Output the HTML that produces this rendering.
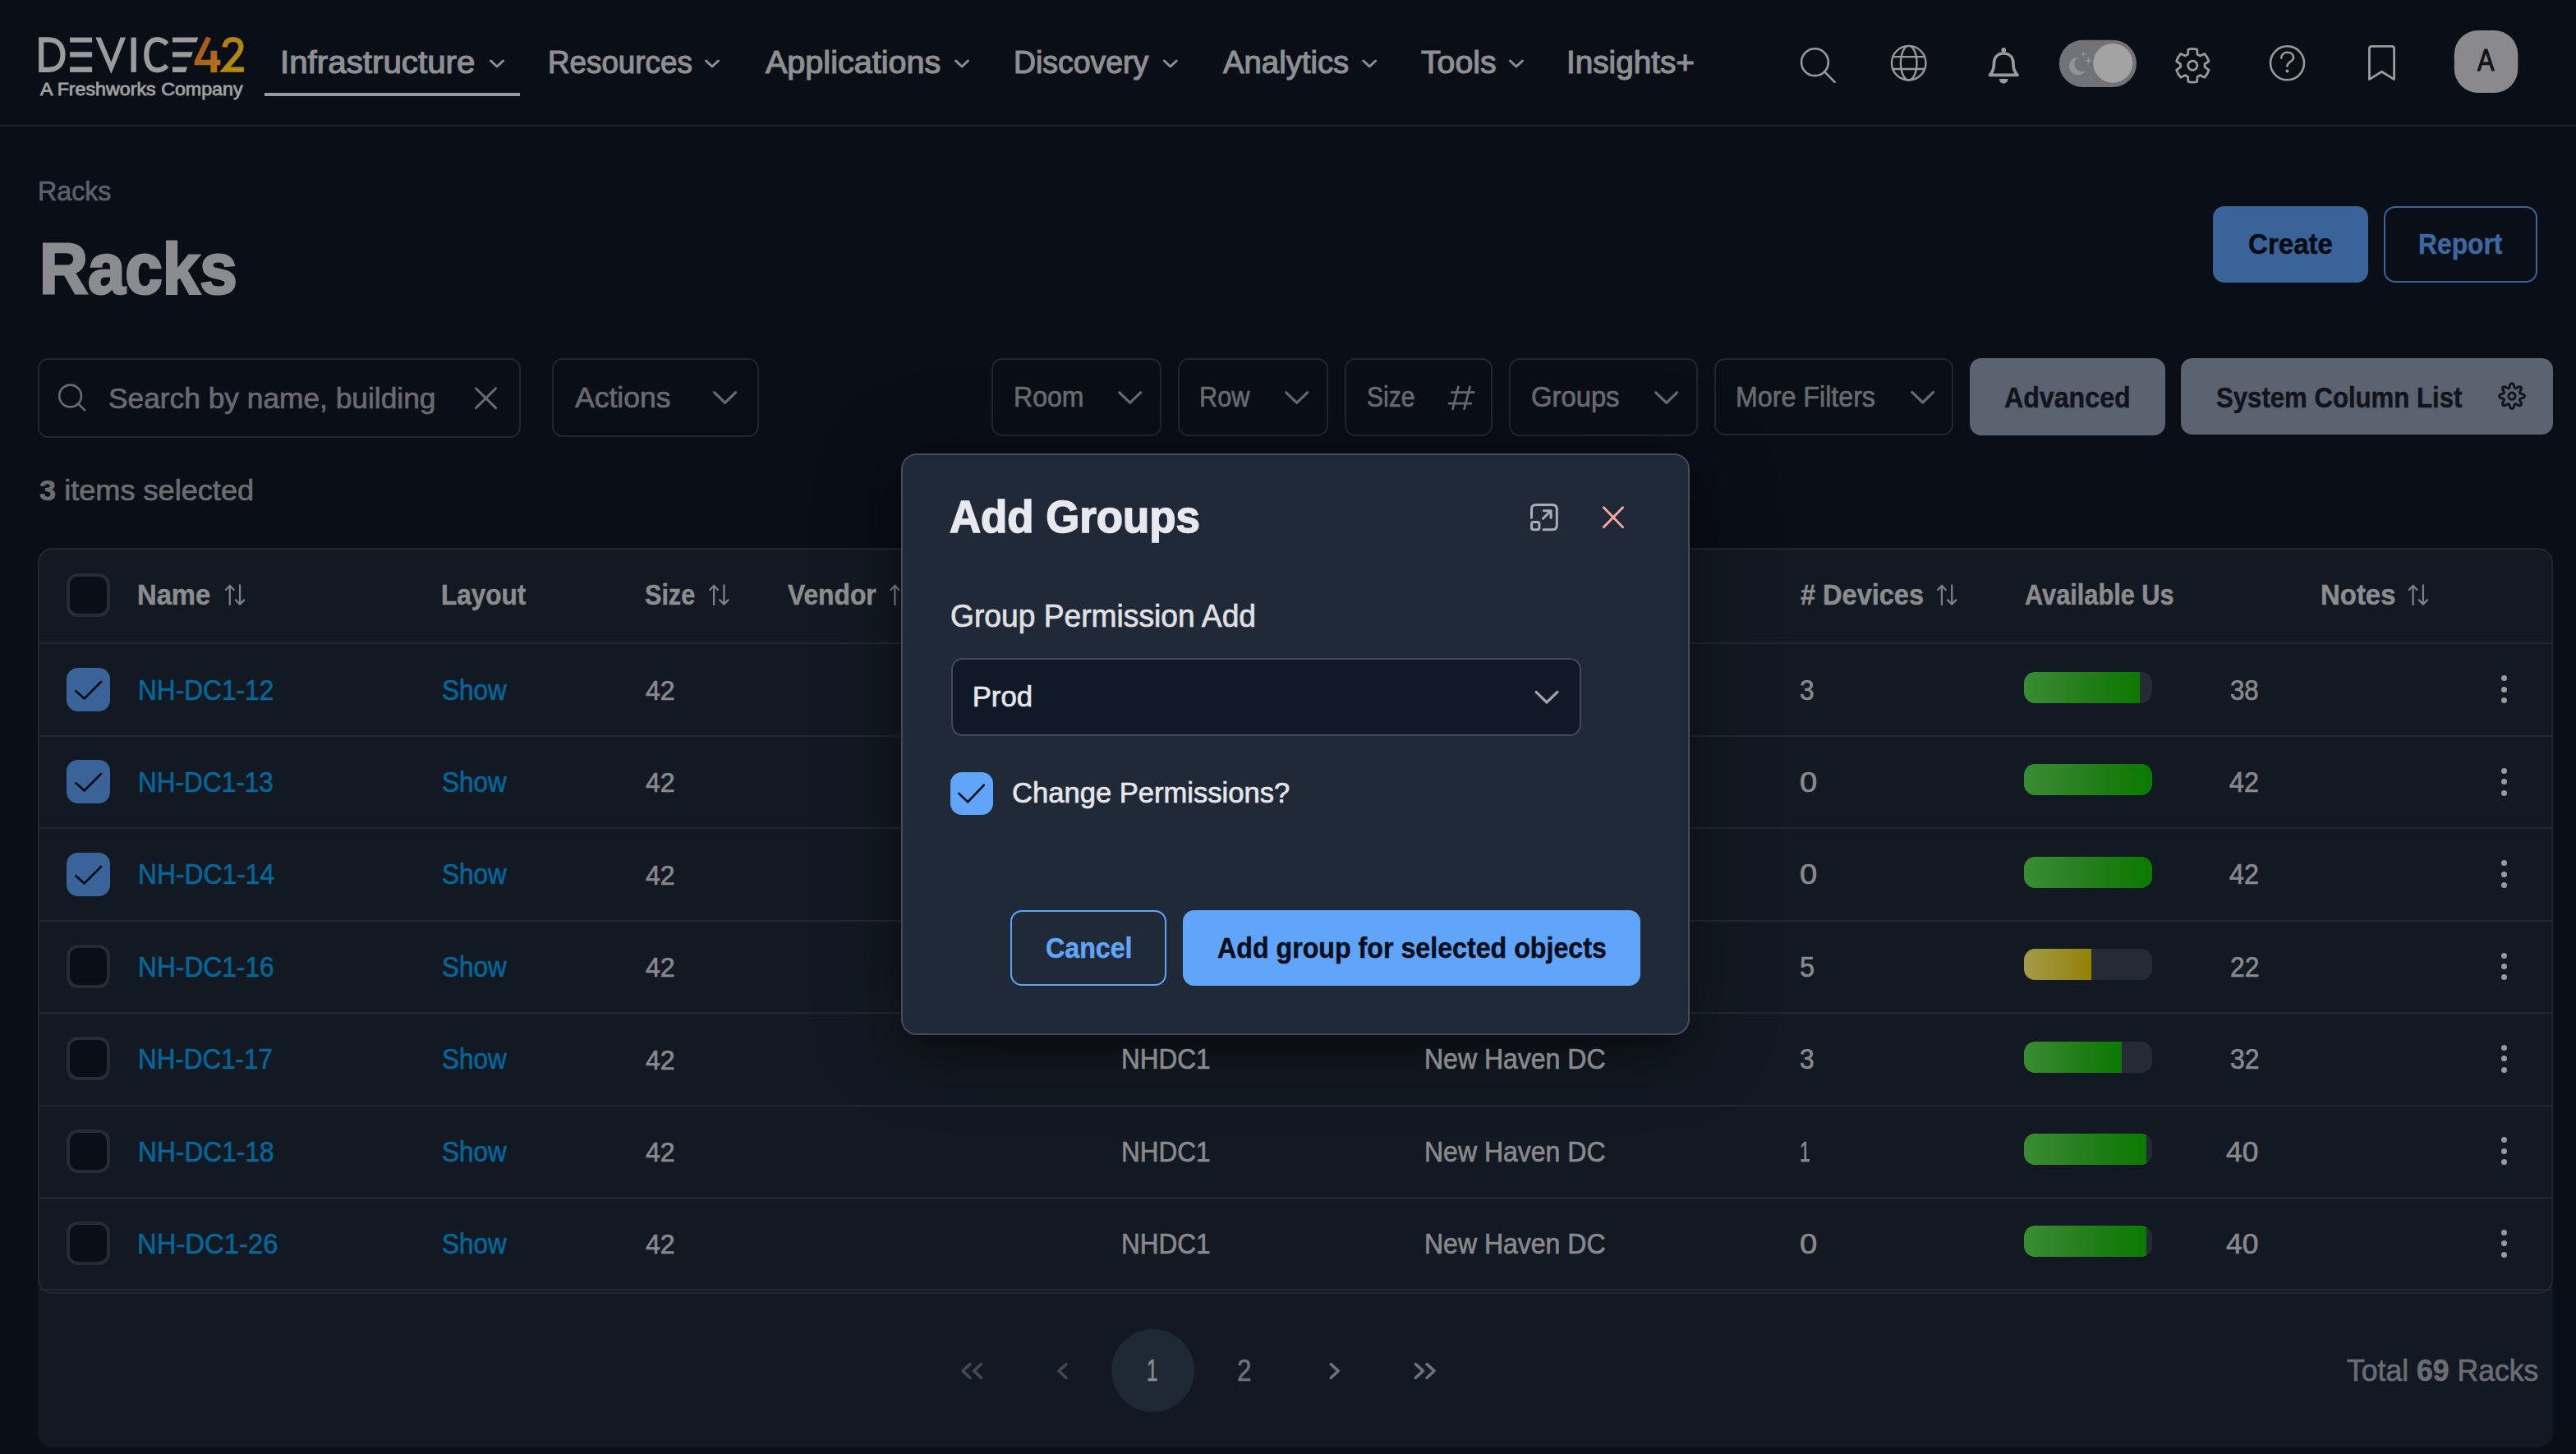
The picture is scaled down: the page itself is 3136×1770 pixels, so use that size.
<!DOCTYPE html>
<html lang="en">
<head>
<meta charset="utf-8">
<title>Racks - Device42</title>
<style>
html,body{margin:0;padding:0;}
body{width:3136px;height:1770px;overflow:hidden;background:#0a0e17;font-family:"Liberation Sans",sans-serif;position:relative;}
.t{position:absolute;white-space:nowrap;line-height:1;transform-origin:0 50%;display:block;}
.t b{font-weight:700;}
.abs{position:absolute;display:block;}
.box{position:absolute;box-sizing:border-box;border:2px solid #22262f;border-radius:13px;}
svg{position:absolute;overflow:visible;}
.hr{position:absolute;left:48px;width:3058px;height:2px;background:#232832;}
.cb{position:absolute;box-sizing:border-box;width:53px;height:53px;left:81px;border-radius:14px;}
.cb.off{border:4px solid #272b35;background:#0a0e17;}
.cb.on{background:#3a6399;}
.bar{position:absolute;left:2464px;width:156px;height:38px;border-radius:13.5px;background:#252a35;overflow:hidden;}
.bar i{position:absolute;left:0;top:0;height:100%;background:linear-gradient(90deg,#378d30 0,#2e8426 30%,#1f7d16 60%,#0b7a01 100%);}
.bar.y i{background:linear-gradient(90deg,#a39a4a 0,#9a8e2a 50%,#948205 100%);}
.dot{position:absolute;width:7px;height:7px;border-radius:50%;background:#9a9a9c;left:3045px;}
</style>
</head>
<body>
<!-- header -->
<div class="abs" style="left:0;top:152px;width:3136px;height:2px;background:#1d212a;"></div>
<svg width="3136" height="152" viewBox="0 0 3136 152" style="left:0;top:0;">
 <defs><linearGradient id="g4" x1="0" y1="0" x2="1" y2="1"><stop offset="0" stop-color="#9d4f1e"/><stop offset="1" stop-color="#b9761a"/></linearGradient>
 <linearGradient id="g2" gradientUnits="userSpaceOnUse" x1="270" y1="45" x2="297" y2="88"><stop offset="0" stop-color="#b37c14"/><stop offset="1" stop-color="#b0920e"/></linearGradient></defs>
 <!-- logo -->
 <g fill="none" stroke="#9c9c9c" stroke-width="6.2">
  <path d="M50.2 48.3H59.5C70.5 48.3 76.5 55.8 76.5 66.6S70.5 84.8 59.5 84.8H50.2Z"/>
  <path d="M203.2 53.6C199.6 49.8 196 48 191.4 48C183.2 48 178.3 55.4 178.3 66.6S183.2 85.3 191.4 85.3C196 85.3 199.6 83.6 203.2 79.8"/>
 </g>
 <g fill="#9c9c9c">
  <rect x="85.1" y="45.6" width="27" height="6"/><rect x="85.1" y="63.2" width="27" height="6.4"/><rect x="85.1" y="81.4" width="27" height="6.5"/>
  <path d="M116.3 45.6H122.9L135.4 75.5L146.6 45.6H153.2L135.4 90Z"/>
  <rect x="159.5" y="45.6" width="6.3" height="42.3"/>
  <path d="M210 45.6H241.4L239.2 51.6H210Z"/><path d="M210 63.2H234.9L232.6 69.6H210Z"/><path d="M210 81.4H228.2L225.8 87.9H210Z"/>
 </g>
 <path d="M251 44.6L257.2 46.8L244.6 72.8H256.4V61.8H264.3V72.8H268.4V79.2H264.3V88.2H256.4V79.2H236.6V74.6Z" fill="url(#g4)"/>
 <path d="M273.6 57.5C274.2 51.2 278 48 283.6 48C289.6 48 293.4 51.4 293.4 56.8C293.4 61.6 291 65 286.4 70L273.8 84.7H296.9" fill="none" stroke="url(#g2)" stroke-width="6.2"/>
 <!-- active underline -->
 <rect x="322" y="113" width="311" height="4" fill="#9a9b9d"/>
 <!-- nav chevrons -->
 <g fill="none" stroke="#8e8f92" stroke-width="3" stroke-linecap="round" stroke-linejoin="round">
  <path d="M597.5 74L605 81L612.5 74"/><path d="M859.5 74L867 81L874.5 74"/><path d="M1163.5 74L1171 81L1178.5 74"/>
  <path d="M1417.3 74L1424.8 81L1432.3 74"/><path d="M1659.7 74L1667.2 81L1674.7 74"/><path d="M1838.4 74L1845.9 81L1853.4 74"/>
 </g>
 <!-- search -->
 <g fill="none" stroke="#9a9a9a" stroke-width="2.6" stroke-linecap="round">
  <circle cx="2209.4" cy="75.7" r="16.4"/><path d="M2221.4 87.6L2233.6 99.8"/>
 </g>
 <!-- globe -->
 <g fill="none" stroke="#9a9a9a" stroke-width="2.4">
  <circle cx="2323.7" cy="76.7" r="20.8"/><ellipse cx="2323.7" cy="76.7" rx="9.8" ry="20.8"/>
  <path d="M2304.4 69.1H2343M2304.4 84H2343"/>
 </g>
 <!-- bell -->
 <path d="M2439.2 65C2431.5 65 2427.4 70.5 2427.4 78C2427.4 84 2425.6 88 2422.4 91.3H2456C2452.8 88 2451 84 2451 78C2451 70.5 2446.9 65 2439.2 65Z" fill="none" stroke="#9a9a9a" stroke-width="3.7" stroke-linejoin="round"/>
 <circle cx="2439.2" cy="61" r="2.9" fill="#9a9a9a"/>
 <path d="M2433.8 96H2444.6A5.4 5.6 0 0 1 2433.8 96Z" fill="#9a9a9a"/>
 <!-- toggle -->
 <rect x="2506.8" y="48.8" width="94.2" height="57.2" rx="28.6" fill="#717379"/>
 <circle cx="2572.2" cy="76.9" r="24" fill="#a3a3a3"/>
 <path d="M2530.5 69.4A11 11 0 1 0 2539.4 86.2A9 9 0 0 1 2530.5 69.4Z" fill="#929397"/>
 <path d="M2536.400 61.800L2537.300 65.000L2540.400 65.800L2537.300 66.700L2536.400 69.800L2535.500 66.700L2532.400 65.800L2535.500 65.000Z M2542.600 68.800L2543.800 72.800L2547.600 73.800L2543.800 75.000L2542.600 78.800L2541.400 75.000L2537.600 73.800L2541.400 72.800Z" fill="#929397"/>
 <!-- gear placeholder --><g fill="none" stroke="#9a9a9a" stroke-width="2.8" stroke-linejoin="round"><path d="M2663.5 66.2L2664.0 60.1A20.4 20.4 0 0 1 2674.6 60.1L2675.1 66.2A14.8 14.8 0 0 1 2678.2 68.0L2683.7 65.4A20.4 20.4 0 0 1 2689.0 74.5L2684.0 78.0A14.8 14.8 0 0 1 2684.0 81.6L2689.0 85.1A20.4 20.4 0 0 1 2683.7 94.2L2678.2 91.6A14.8 14.8 0 0 1 2675.1 93.4L2674.6 99.5A20.4 20.4 0 0 1 2664.0 99.5L2663.5 93.4A14.8 14.8 0 0 1 2660.4 91.6L2654.9 94.2A20.4 20.4 0 0 1 2649.6 85.1L2654.6 81.6A14.8 14.8 0 0 1 2654.6 78.0L2649.6 74.5A20.4 20.4 0 0 1 2654.9 65.4L2660.4 68.0A14.8 14.8 0 0 1 2663.5 66.2Z"/><circle cx="2669.3" cy="79.8" r="5.6"/></g>
 <!-- help -->
 <g fill="none" stroke="#9a9a9a" stroke-width="2.6" stroke-linecap="round">
  <circle cx="2784.5" cy="76.8" r="20.5"/>
  <path d="M2777.2 70.6C2777.2 66.4 2780.4 63.8 2784.6 63.8C2788.8 63.8 2792 66.4 2792 70.2C2792 74.8 2784.4 75.2 2784.4 80.4"/>
 </g>
 <circle cx="2784.4" cy="86.6" r="2" fill="#9a9a9a"/>
 <!-- bookmark -->
 <path d="M2884.4 96.6V59.4C2884.4 57.6 2885.6 56.4 2887.4 56.4H2911.6C2913.4 56.4 2914.6 57.6 2914.6 59.4V96.6L2899.5 87.2Z" fill="none" stroke="#9a9a9a" stroke-width="2.8" stroke-linejoin="round"/>
 <!-- avatar -->
 <rect x="2987.8" y="37" width="77.5" height="76" rx="29" fill="#8a8a8c"/>
</svg>

<!-- page actions -->
<div class="abs" style="left:2694px;top:251px;width:189px;height:93px;border-radius:14px;background:#3a6399;"></div>
<div class="abs" style="left:2902px;top:251px;width:187px;height:93px;border-radius:14px;border:2px solid #3a6399;box-sizing:border-box;"></div>
<!-- filter row -->
<div class="box" style="left:46px;top:436px;width:588px;height:96.5px;"></div>
<div class="box" style="left:672.4px;top:436px;width:252px;height:95.6px;"></div>
<div class="box" style="left:1207.4px;top:436px;width:206.2px;height:95.4px;"></div>
<div class="box" style="left:1433.5px;top:436px;width:183.1px;height:95.4px;"></div>
<div class="box" style="left:1636.5px;top:436px;width:180px;height:95.4px;"></div>
<div class="box" style="left:1836.5px;top:436px;width:230.1px;height:95.4px;"></div>
<div class="box" style="left:2086.5px;top:436px;width:291.1px;height:93.6px;"></div>
<div class="abs" style="left:2397.6px;top:436px;width:238.6px;height:94px;border-radius:14px;background:#5b6270;"></div>
<div class="abs" style="left:2655px;top:436px;width:453px;height:92.6px;border-radius:14px;background:#5b6270;"></div>
<svg width="3136" height="140" viewBox="0 420 3136 140" style="left:0;top:420px;">
 <g fill="none" stroke="#696a6e" stroke-width="2.6" stroke-linecap="round">
  <circle cx="85.6" cy="482" r="13.4"/><path d="M95.4 491.8L103.2 499.4"/>
  <path d="M579.4 472.8L603.6 496.6M603.6 472.8L579.4 496.6" stroke-width="3"/>
 </g>
 <g fill="none" stroke="#696a6e" stroke-width="3.2" stroke-linecap="round" stroke-linejoin="round">
  <path d="M869.6 477.6L882.6 490.4L895.6 477.6"/>
  <path d="M1362.8 477.8L1375.7 490.4L1388.6 477.8"/>
  <path d="M1565.8 477.8L1578.7 490.4L1591.6 477.8"/>
  <path d="M2015.8 477.8L2028.7 490.4L2041.6 477.8"/>
  <path d="M2327.8 477.4L2340.7 490L2353.6 477.4"/>
 </g>
 <g fill="none" stroke="#696a6e" stroke-width="2.7" stroke-linecap="round">
  <path d="M1775.3 470.8L1768.5 497.8M1789.5 470.8L1782.5 497.8M1767.2 477.6H1794.4M1763.8 491.2H1790.8"/>
 </g>
 <g fill="none" stroke="#10141c" stroke-width="3.0" stroke-linejoin="round"><path d="M3073.4 482.2L3073.2 483.0L3072.7 483.7L3071.8 484.4L3070.2 484.8L3069.0 485.2L3068.2 485.5L3067.7 485.9L3067.5 486.4L3067.6 487.1L3067.9 487.9L3068.4 489.0L3069.3 490.4L3069.5 491.5L3069.3 492.4L3068.9 493.1L3068.2 493.5L3067.3 493.7L3066.2 493.5L3064.8 492.6L3063.7 492.1L3062.9 491.8L3062.2 491.7L3061.7 491.9L3061.3 492.4L3061.0 493.2L3060.6 494.4L3060.2 496.0L3059.5 496.9L3058.8 497.4L3058.0 497.6L3057.2 497.4L3056.5 496.9L3055.8 496.0L3055.4 494.4L3055.0 493.2L3054.7 492.4L3054.3 491.9L3053.8 491.7L3053.1 491.8L3052.3 492.1L3051.2 492.6L3049.8 493.5L3048.7 493.7L3047.8 493.5L3047.1 493.1L3046.7 492.4L3046.5 491.5L3046.7 490.4L3047.6 489.0L3048.1 487.9L3048.4 487.1L3048.5 486.4L3048.3 485.9L3047.8 485.5L3047.0 485.2L3045.8 484.8L3044.2 484.4L3043.3 483.7L3042.8 483.0L3042.6 482.2L3042.8 481.4L3043.3 480.7L3044.2 480.0L3045.8 479.6L3047.0 479.2L3047.8 478.9L3048.3 478.5L3048.5 478.0L3048.4 477.3L3048.1 476.5L3047.6 475.4L3046.7 474.0L3046.5 472.9L3046.7 472.0L3047.1 471.3L3047.8 470.9L3048.7 470.7L3049.8 470.9L3051.2 471.8L3052.3 472.3L3053.1 472.6L3053.8 472.7L3054.3 472.5L3054.7 472.0L3055.0 471.2L3055.4 470.0L3055.8 468.4L3056.5 467.5L3057.2 467.0L3058.0 466.8L3058.8 467.0L3059.5 467.5L3060.2 468.4L3060.6 470.0L3061.0 471.2L3061.3 472.0L3061.7 472.5L3062.2 472.7L3062.9 472.6L3063.7 472.3L3064.8 471.8L3066.2 470.9L3067.3 470.7L3068.2 470.9L3068.9 471.3L3069.3 472.0L3069.5 472.9L3069.3 474.0L3068.4 475.4L3067.9 476.5L3067.6 477.3L3067.5 478.0L3067.7 478.5L3068.2 478.9L3069.0 479.2L3070.2 479.6L3071.8 480.0L3072.7 480.7L3073.2 481.4Z"/><circle cx="3058" cy="482.2" r="4.1"/></g>
</svg>

<!-- table card -->
<div class="abs" style="left:46px;top:667px;width:3062px;height:1095px;border-radius:18px;background:#131922;"></div>
<div class="abs" style="left:46px;top:667px;width:3062px;height:908px;border-radius:18px;border:2px solid #22262f;box-sizing:border-box;"></div>
<div class="hr" style="top:781.7px;"></div>
<div class="hr" style="top:895.0px;"></div>
<div class="hr" style="top:1007.4px;"></div>
<div class="hr" style="top:1119.8px;"></div>
<div class="hr" style="top:1232.2px;"></div>
<div class="hr" style="top:1344.6px;"></div>
<div class="hr" style="top:1457.0px;"></div>
<div class="hr" style="top:1568.6px;"></div>
<div class="cb off" style="top:698px;"></div>
<svg width="3136" height="60" viewBox="0 700 3136 60" style="left:0;top:700px;"><g fill="none" stroke-width="2.3" stroke-linecap="round" stroke-linejoin="round"><path d="M279.8 736V713M274.9 718L279.8 713L284.7 718" stroke="#7e7f82"/><path d="M292.1 712.4V735.6M286.9 730.4L292.1 735.6L297.3 730.4" stroke="#7e7f82"/><path d="M869.1 736V713M864.2 718L869.1 713L874.0 718" stroke="#7e7f82"/><path d="M881.4 712.4V735.6M876.2 730.4L881.4 735.6L886.6 730.4" stroke="#7e7f82"/><path d="M1089.4 736V713M1084.5 718L1089.4 713L1094.3 718" stroke="#7e7f82"/><path d="M2363.9 736V713M2359.0 718L2363.9 713L2368.8 718" stroke="#7e7f82"/><path d="M2376.2 712.4V735.6M2371.0 730.4L2376.2 735.6L2381.4 730.4" stroke="#7e7f82"/><path d="M2937.6 736V713M2932.7 718L2937.6 713L2942.5 718" stroke="#7e7f82"/><path d="M2949.9 712.4V735.6M2944.7 730.4L2949.9 735.6L2955.1 730.4" stroke="#7e7f82"/></g></svg>
<div class="cb on" style="top:812.8px;"><svg width="53" height="53" viewBox="0 0 53 53" style="left:0;top:0;"><path d="M11.4 28.2L21.6 37.4L42 17" fill="none" stroke="#0b0f18" stroke-width="2.8" stroke-linecap="round" stroke-linejoin="round"/></svg></div>
<div class="bar" style="top:817.9px;"><i style="width:141.1px;"></i></div>
<div class="dot" style="top:822.4px;"></div>
<div class="dot" style="top:835.8px;"></div>
<div class="dot" style="top:849.2px;"></div>
<div class="cb on" style="top:925.2px;"><svg width="53" height="53" viewBox="0 0 53 53" style="left:0;top:0;"><path d="M11.4 28.2L21.6 37.4L42 17" fill="none" stroke="#0b0f18" stroke-width="2.8" stroke-linecap="round" stroke-linejoin="round"/></svg></div>
<div class="bar" style="top:930.3px;"><i style="width:156.0px;"></i></div>
<div class="dot" style="top:934.8px;"></div>
<div class="dot" style="top:948.2px;"></div>
<div class="dot" style="top:961.6px;"></div>
<div class="cb on" style="top:1037.6px;"><svg width="53" height="53" viewBox="0 0 53 53" style="left:0;top:0;"><path d="M11.4 28.2L21.6 37.4L42 17" fill="none" stroke="#0b0f18" stroke-width="2.8" stroke-linecap="round" stroke-linejoin="round"/></svg></div>
<div class="bar" style="top:1042.7px;"><i style="width:156.0px;"></i></div>
<div class="dot" style="top:1047.2px;"></div>
<div class="dot" style="top:1060.6px;"></div>
<div class="dot" style="top:1074.0px;"></div>
<div class="cb off" style="top:1150.0px;"></div>
<div class="bar y" style="top:1155.1px;"><i style="width:81.7px;"></i></div>
<div class="dot" style="top:1159.6px;"></div>
<div class="dot" style="top:1173.0px;"></div>
<div class="dot" style="top:1186.4px;"></div>
<div class="cb off" style="top:1262.4px;"></div>
<div class="bar" style="top:1267.5px;"><i style="width:118.9px;"></i></div>
<div class="dot" style="top:1272.0px;"></div>
<div class="dot" style="top:1285.4px;"></div>
<div class="dot" style="top:1298.8px;"></div>
<div class="cb off" style="top:1374.8px;"></div>
<div class="bar" style="top:1379.9px;"><i style="width:148.6px;"></i></div>
<div class="dot" style="top:1384.4px;"></div>
<div class="dot" style="top:1397.8px;"></div>
<div class="dot" style="top:1411.2px;"></div>
<div class="cb off" style="top:1487.2px;"></div>
<div class="bar" style="top:1492.3px;"><i style="width:148.6px;"></i></div>
<div class="dot" style="top:1496.8px;"></div>
<div class="dot" style="top:1510.2px;"></div>
<div class="dot" style="top:1523.6px;"></div>
<div class="abs" style="left:1352.9px;top:1617.8px;width:101.2px;height:101.2px;border-radius:50%;background:#1f2835;"></div>
<svg width="700" height="40" viewBox="1150 1650 700 40" style="left:1150px;top:1650px;"><g fill="none" stroke-width="3.6" stroke-linecap="round" stroke-linejoin="round">
<path d="M1181 1660.6L1172 1668.9L1181 1677.2M1194.6 1660.6L1185.6 1668.9L1194.6 1677.2" stroke="#44474e"/>
<path d="M1298 1660.6L1289 1668.9L1298 1677.2" stroke="#44474e"/>
<path d="M1620.2 1660.6L1629.2 1668.9L1620.2 1677.2" stroke="#6e7075"/>
<path d="M1723.4 1660.6L1732.4 1668.9L1723.4 1677.2M1737 1660.6L1746 1668.9L1737 1677.2" stroke="#6e7075"/>
</g></svg>
<!-- modal -->
<div class="abs" style="left:1097.4px;top:552.4px;width:959.8px;height:707.6px;border-radius:19px;background:#1f2937;border:2px solid #424b57;box-sizing:border-box;box-shadow:0 26px 44px -14px rgba(0,0,0,0.5),0 8px 110px 0 rgba(0,0,0,0.28);"></div>
<div class="abs" style="left:1157.5px;top:801px;width:767.4px;height:94.6px;border-radius:14px;background:#111827;border:2px solid #424b57;box-sizing:border-box;"></div>
<div class="abs" style="left:1157px;top:940.2px;width:52.4px;height:52px;border-radius:14px;background:#60a5fa;"></div>
<div class="abs" style="left:1229.8px;top:1107.8px;width:190.6px;height:92.4px;border-radius:14px;border:2.5px solid #60a5fa;box-sizing:border-box;"></div>
<div class="abs" style="left:1439.8px;top:1107.8px;width:557.2px;height:92.4px;border-radius:14px;background:#60a5fa;"></div>
<svg width="960" height="710" viewBox="1097 552 960 710" style="left:1097px;top:552px;">
 <!-- maximize -->
 <g fill="none" stroke="#a9adb5" stroke-width="3" stroke-linecap="round" stroke-linejoin="round">
  <path d="M1864.5 630.2V619.9C1864.5 616.4 1866.5 614.4 1870 614.4H1889.8C1893.3 614.4 1895.3 616.4 1895.3 619.9V639.2C1895.3 642.7 1893.3 644.7 1889.8 644.7H1879"/>
  <rect x="1864.5" y="635.6" width="9.4" height="9.1" rx="2.4"/>
  <path d="M1878.4 631.2L1887.6 622.2M1879.4 621.7H1888.1V630.2"/>
 </g>
 <!-- close -->
 <path d="M1952.3 617.8L1975.6 641.7M1975.6 617.8L1952.3 641.7" fill="none" stroke="#fca5a5" stroke-width="2.9" stroke-linecap="round"/>
 <!-- select chevron -->
 <path d="M1870 842.4L1883 855L1896 842.4" fill="none" stroke="#a3a4a9" stroke-width="3.2" stroke-linecap="round" stroke-linejoin="round"/>
 <!-- check -->
 <path d="M1167.4 966L1178.2 976.2L1197.8 955.8" fill="none" stroke="#111827" stroke-width="2.8" stroke-linecap="round" stroke-linejoin="round"/>
</svg>

<span class="t " style="left:48.6px;top:98.4px;font-size:21.66px;color:#a0a0a0;-webkit-text-stroke:0.8px;transform:scaleX(1.0726);">A Freshworks Company</span>
<span class="t " style="left:340.5px;top:57.4px;font-size:38.08px;color:#8e8f92;-webkit-text-stroke:1.2px;transform:scaleX(1.0584);">Infrastructure</span>
<span class="t " style="left:666.8px;top:57.4px;font-size:38.08px;color:#8e8f92;-webkit-text-stroke:1.2px;transform:scaleX(0.9659);">Resources</span>
<span class="t " style="left:931.7px;top:57.4px;font-size:38.08px;color:#8e8f92;-webkit-text-stroke:1.2px;transform:scaleX(1.0383);">Applications</span>
<span class="t " style="left:1233.5px;top:57.4px;font-size:38.08px;color:#8e8f92;-webkit-text-stroke:1.2px;transform:scaleX(0.9825);">Discovery</span>
<span class="t " style="left:1488.5px;top:57.4px;font-size:38.08px;color:#8e8f92;-webkit-text-stroke:1.2px;transform:scaleX(1.0059);">Analytics</span>
<span class="t " style="left:1729.7px;top:57.4px;font-size:38.08px;color:#8e8f92;-webkit-text-stroke:1.2px;transform:scaleX(1.0295);">Tools</span>
<span class="t " style="left:1907.2px;top:57.4px;font-size:38.08px;color:#8e8f92;-webkit-text-stroke:1.2px;transform:scaleX(1.0161);">Insights+</span>
<span class="t " style="left:3015.7px;top:55.0px;font-size:37.65px;color:#121212;-webkit-text-stroke:1.0px;transform:scaleX(0.8154);">A</span>
<span class="t " style="left:45.6px;top:214.7px;font-size:34.01px;color:#5a626c;-webkit-text-stroke:0.7px;transform:scaleX(0.9467);">Racks</span>
<span class="t " style="left:48.0px;top:282.7px;font-size:87.94px;color:#8b8c8f;font-weight:700;-webkit-text-stroke:3.2px;transform:scaleX(0.9285);">Racks</span>
<span class="t " style="left:2737.0px;top:279.7px;font-size:35.47px;color:#070b14;font-weight:700;-webkit-text-stroke:0.5px;transform:scaleX(0.9330);">Create</span>
<span class="t " style="left:2944.4px;top:279.7px;font-size:35.47px;color:#3d69a3;font-weight:700;-webkit-text-stroke:0.5px;transform:scaleX(0.8964);">Report</span>
<span class="t " style="left:132.3px;top:467.8px;font-size:34.59px;color:#696a6e;-webkit-text-stroke:0.7px;transform:scaleX(1.0211);">Search by name, building</span>
<span class="t " style="left:700.4px;top:466.1px;font-size:35.17px;color:#696a6e;-webkit-text-stroke:0.7px;transform:scaleX(1.0104);">Actions</span>
<span class="t " style="left:1234.1px;top:466.4px;font-size:34.74px;color:#696a6e;-webkit-text-stroke:0.7px;transform:scaleX(0.9225);">Room</span>
<span class="t " style="left:1460.2px;top:466.4px;font-size:34.74px;color:#696a6e;-webkit-text-stroke:0.7px;transform:scaleX(0.8824);">Row</span>
<span class="t " style="left:1663.8px;top:466.4px;font-size:34.74px;color:#696a6e;-webkit-text-stroke:0.7px;transform:scaleX(0.8652);">Size</span>
<span class="t " style="left:1864.4px;top:466.4px;font-size:34.74px;color:#696a6e;-webkit-text-stroke:0.7px;transform:scaleX(0.9438);">Groups</span>
<span class="t " style="left:2113.1px;top:466.4px;font-size:34.74px;color:#696a6e;-webkit-text-stroke:0.7px;transform:scaleX(0.9271);">More Filters</span>
<span class="t " style="left:2440.0px;top:465.9px;font-size:35.03px;color:#10141c;font-weight:700;-webkit-text-stroke:0.5px;transform:scaleX(0.9182);">Advanced</span>
<span class="t " style="left:2697.7px;top:465.9px;font-size:35.03px;color:#10141c;font-weight:700;-webkit-text-stroke:0.5px;transform:scaleX(0.8893);">System Column List</span>
<span class="t " style="left:47.6px;top:578.7px;font-size:35.03px;color:#6c6d70;-webkit-text-stroke:0.7px;transform:scaleX(1.0319);"><b>3</b> items selected</span>
<span class="t " style="left:167.4px;top:706.8px;font-size:34.30px;color:#8b8c8e;font-weight:700;-webkit-text-stroke:0.5px;transform:scaleX(0.9549);">Name</span>
<span class="t " style="left:536.9px;top:706.8px;font-size:34.30px;color:#8b8c8e;font-weight:700;-webkit-text-stroke:0.5px;transform:scaleX(0.9171);">Layout</span>
<span class="t " style="left:784.8px;top:706.8px;font-size:34.30px;color:#8b8c8e;font-weight:700;-webkit-text-stroke:0.5px;transform:scaleX(0.8910);">Size</span>
<span class="t " style="left:958.6px;top:706.8px;font-size:34.30px;color:#8b8c8e;font-weight:700;-webkit-text-stroke:0.5px;transform:scaleX(0.9267);">Vendor</span>
<span class="t " style="left:2191.7px;top:706.8px;font-size:34.30px;color:#8b8c8e;font-weight:700;-webkit-text-stroke:0.5px;transform:scaleX(0.9478);"># Devices</span>
<span class="t " style="left:2464.8px;top:706.8px;font-size:34.30px;color:#8b8c8e;font-weight:700;-webkit-text-stroke:0.5px;transform:scaleX(0.8960);">Available Us</span>
<span class="t " style="left:2824.5px;top:706.8px;font-size:34.30px;color:#8b8c8e;font-weight:700;-webkit-text-stroke:0.5px;transform:scaleX(0.9598);">Notes</span>
<span class="t " style="left:167.5px;top:822.5px;font-size:34.59px;color:#066597;-webkit-text-stroke:0.7px;transform:scaleX(0.9152);">NH-DC1-12</span>
<span class="t " style="left:537.8px;top:822.5px;font-size:34.59px;color:#066597;-webkit-text-stroke:0.7px;transform:scaleX(0.9105);">Show</span>
<span class="t " style="left:785.9px;top:823.0px;font-size:34.01px;color:#88898c;-webkit-text-stroke:0.7px;transform:scaleX(0.9432);">42</span>
<span class="t " style="left:2191.2px;top:822.5px;font-size:34.59px;color:#88898c;-webkit-text-stroke:0.7px;transform:scaleX(0.9118);">3</span>
<span class="t " style="left:2714.6px;top:822.5px;font-size:34.59px;color:#88898c;-webkit-text-stroke:0.7px;transform:scaleX(0.9027);">38</span>
<span class="t " style="left:167.5px;top:934.9px;font-size:34.59px;color:#066597;-webkit-text-stroke:0.7px;transform:scaleX(0.9129);">NH-DC1-13</span>
<span class="t " style="left:537.8px;top:934.9px;font-size:34.59px;color:#066597;-webkit-text-stroke:0.7px;transform:scaleX(0.9105);">Show</span>
<span class="t " style="left:785.9px;top:935.4px;font-size:34.01px;color:#88898c;-webkit-text-stroke:0.7px;transform:scaleX(0.9432);">42</span>
<span class="t " style="left:2191.0px;top:934.9px;font-size:34.59px;color:#88898c;-webkit-text-stroke:0.7px;transform:scaleX(1.1059);">0</span>
<span class="t " style="left:2714.3px;top:934.9px;font-size:34.59px;color:#88898c;-webkit-text-stroke:0.7px;transform:scaleX(0.9351);">42</span>
<span class="t " style="left:167.5px;top:1047.3px;font-size:34.59px;color:#066597;-webkit-text-stroke:0.7px;transform:scaleX(0.9202);">NH-DC1-14</span>
<span class="t " style="left:537.8px;top:1047.3px;font-size:34.59px;color:#066597;-webkit-text-stroke:0.7px;transform:scaleX(0.9105);">Show</span>
<span class="t " style="left:785.9px;top:1047.8px;font-size:34.01px;color:#88898c;-webkit-text-stroke:0.7px;transform:scaleX(0.9432);">42</span>
<span class="t " style="left:2191.0px;top:1047.3px;font-size:34.59px;color:#88898c;-webkit-text-stroke:0.7px;transform:scaleX(1.1059);">0</span>
<span class="t " style="left:2714.3px;top:1047.3px;font-size:34.59px;color:#88898c;-webkit-text-stroke:0.7px;transform:scaleX(0.9351);">42</span>
<span class="t " style="left:167.5px;top:1159.7px;font-size:34.59px;color:#066597;-webkit-text-stroke:0.7px;transform:scaleX(0.9174);">NH-DC1-16</span>
<span class="t " style="left:537.8px;top:1159.7px;font-size:34.59px;color:#066597;-webkit-text-stroke:0.7px;transform:scaleX(0.9105);">Show</span>
<span class="t " style="left:785.9px;top:1160.2px;font-size:34.01px;color:#88898c;-webkit-text-stroke:0.7px;transform:scaleX(0.9432);">42</span>
<span class="t " style="left:2191.2px;top:1159.7px;font-size:34.59px;color:#88898c;-webkit-text-stroke:0.7px;transform:scaleX(0.9412);">5</span>
<span class="t " style="left:2714.8px;top:1159.7px;font-size:34.59px;color:#88898c;-webkit-text-stroke:0.7px;transform:scaleX(0.9222);">22</span>
<span class="t " style="left:167.5px;top:1272.1px;font-size:34.59px;color:#066597;-webkit-text-stroke:0.7px;transform:scaleX(0.9079);">NH-DC1-17</span>
<span class="t " style="left:537.8px;top:1272.1px;font-size:34.59px;color:#066597;-webkit-text-stroke:0.7px;transform:scaleX(0.9105);">Show</span>
<span class="t " style="left:785.9px;top:1272.6px;font-size:34.01px;color:#88898c;-webkit-text-stroke:0.7px;transform:scaleX(0.9432);">42</span>
<span class="t " style="left:1364.5px;top:1272.1px;font-size:34.59px;color:#88898c;-webkit-text-stroke:0.7px;transform:scaleX(0.9103);">NHDC1</span>
<span class="t " style="left:1734.2px;top:1272.1px;font-size:34.59px;color:#88898c;-webkit-text-stroke:0.7px;transform:scaleX(0.9255);">New Haven DC</span>
<span class="t " style="left:2191.2px;top:1272.1px;font-size:34.59px;color:#88898c;-webkit-text-stroke:0.7px;transform:scaleX(0.9118);">3</span>
<span class="t " style="left:2714.8px;top:1272.1px;font-size:34.59px;color:#88898c;-webkit-text-stroke:0.7px;transform:scaleX(0.9222);">32</span>
<span class="t " style="left:167.5px;top:1384.5px;font-size:34.59px;color:#066597;-webkit-text-stroke:0.7px;transform:scaleX(0.9174);">NH-DC1-18</span>
<span class="t " style="left:537.8px;top:1384.5px;font-size:34.59px;color:#066597;-webkit-text-stroke:0.7px;transform:scaleX(0.9105);">Show</span>
<span class="t " style="left:785.9px;top:1385.0px;font-size:34.01px;color:#88898c;-webkit-text-stroke:0.7px;transform:scaleX(0.9432);">42</span>
<span class="t " style="left:1364.5px;top:1384.5px;font-size:34.59px;color:#88898c;-webkit-text-stroke:0.7px;transform:scaleX(0.9103);">NHDC1</span>
<span class="t " style="left:1734.2px;top:1384.5px;font-size:34.59px;color:#88898c;-webkit-text-stroke:0.7px;transform:scaleX(0.9255);">New Haven DC</span>
<span class="t " style="left:2191.3px;top:1384.5px;font-size:34.59px;color:#88898c;-webkit-text-stroke:0.7px;transform:scaleX(0.6500);">1</span>
<span class="t " style="left:2710.1px;top:1384.5px;font-size:34.59px;color:#88898c;-webkit-text-stroke:0.7px;transform:scaleX(1.0211);">40</span>
<span class="t " style="left:167.4px;top:1496.9px;font-size:34.59px;color:#066597;-webkit-text-stroke:0.7px;transform:scaleX(0.9489);">NH-DC1-26</span>
<span class="t " style="left:537.8px;top:1496.9px;font-size:34.59px;color:#066597;-webkit-text-stroke:0.7px;transform:scaleX(0.9105);">Show</span>
<span class="t " style="left:785.9px;top:1497.4px;font-size:34.01px;color:#88898c;-webkit-text-stroke:0.7px;transform:scaleX(0.9432);">42</span>
<span class="t " style="left:1364.5px;top:1496.9px;font-size:34.59px;color:#88898c;-webkit-text-stroke:0.7px;transform:scaleX(0.9103);">NHDC1</span>
<span class="t " style="left:1734.2px;top:1496.9px;font-size:34.59px;color:#88898c;-webkit-text-stroke:0.7px;transform:scaleX(0.9255);">New Haven DC</span>
<span class="t " style="left:2191.0px;top:1496.9px;font-size:34.59px;color:#88898c;-webkit-text-stroke:0.7px;transform:scaleX(1.1059);">0</span>
<span class="t " style="left:2710.1px;top:1496.9px;font-size:34.59px;color:#88898c;-webkit-text-stroke:0.7px;transform:scaleX(1.0211);">40</span>
<span class="t " style="left:1395.9px;top:1650.5px;font-size:36.05px;color:#8a8b8e;-webkit-text-stroke:0.7px;transform:scaleX(0.6706);">1</span>
<span class="t " style="left:1505.5px;top:1650.5px;font-size:36.05px;color:#6f7075;-webkit-text-stroke:0.7px;transform:scaleX(0.8722);">2</span>
<span class="t " style="left:2857.4px;top:1650.5px;font-size:36.05px;color:#6b6d72;-webkit-text-stroke:0.7px;transform:scaleX(0.9869);">Total <b>69</b> Racks</span>
<span class="t " style="left:1156.0px;top:601.4px;font-size:55.96px;color:#e8e9ee;font-weight:700;-webkit-text-stroke:1.6px;transform:scaleX(0.9429);">Add Groups</span>
<span class="t " style="left:1156.6px;top:730.2px;font-size:39.39px;color:#e0e1e4;-webkit-text-stroke:0.7px;transform:scaleX(0.9444);">Group Permission Add</span>
<span class="t " style="left:1183.7px;top:831.3px;font-size:34.74px;color:#e5e7eb;-webkit-text-stroke:0.7px;">Prod</span>
<span class="t " style="left:1232.0px;top:947.8px;font-size:35.76px;color:#e5e7eb;-webkit-text-stroke:0.7px;transform:scaleX(0.9672);">Change Permissions?</span>
<span class="t " style="left:1273.1px;top:1136.4px;font-size:35.32px;color:#60a5fa;font-weight:700;-webkit-text-stroke:0.5px;transform:scaleX(0.9115);">Cancel</span>
<span class="t " style="left:1481.8px;top:1136.4px;font-size:35.32px;color:#0a0e1a;font-weight:700;-webkit-text-stroke:0.5px;transform:scaleX(0.9114);">Add group for selected objects</span>
</body>
</html>
